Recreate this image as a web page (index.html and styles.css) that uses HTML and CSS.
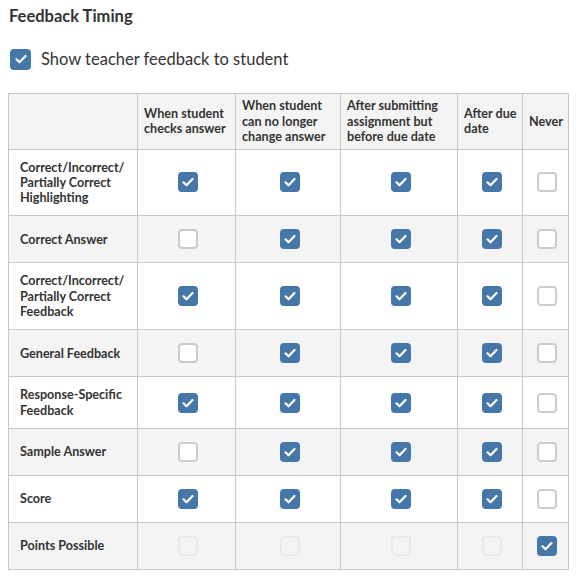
FILE: index.html
```html
<!DOCTYPE html>
<html>
<head>
<meta charset="utf-8">
<link rel="stylesheet" href="styles.css">
</head>
<body>
<div class="page">
  <h2 class="title">Feedback Timing</h2>
  <label class="show-row">
    <span class="cb cb-lg checked"><svg viewBox="0 0 20 20"><path d="M5.5 10.3l3 3 6-6.3" /></svg></span>
    <span class="show-text">Show teacher feedback to student</span>
  </label>
  <table class="grid">
    <colgroup>
      <col class="c0"><col class="c1"><col class="c2"><col class="c3"><col class="c4"><col class="c5">
    </colgroup>
    <thead>
      <tr>
        <th></th>
        <th>When student checks answer</th>
        <th>When student can no longer change answer</th>
        <th>After submitting assignment but before due date</th>
        <th>After due date</th>
        <th>Never</th>
      </tr>
    </thead>
    <tbody id="body"></tbody>
  </table>
</div>
<script src="app.js"></script>
</body>
</html>
```

FILE: app.js
```js
const rows = [
  ["Correct/Incorrect/ Partially Correct Highlighting", "11110"],
  ["Correct Answer", "01110"],
  ["Correct/Incorrect/ Partially Correct Feedback", "11110"],
  ["General Feedback", "01110"],
  ["Response-Specific Feedback", "11110"],
  ["Sample Answer", "01110"],
  ["Score", "11110"],
  ["Points Possible", "dddd1"]
];
const check = '<svg viewBox="0 0 20 20"><path d="M5.5 10.3l3 3 6-6.3" /></svg>';
const body = document.getElementById("body");
rows.forEach(([label, states]) => {
  const tr = document.createElement("tr");
  const th = document.createElement("td");
  th.className = "label";
  th.textContent = label;
  tr.appendChild(th);
  for (const s of states) {
    const td = document.createElement("td");
    td.className = "box";
    const cls = s === "1" ? "cb checked" : s === "d" ? "cb disabled" : "cb";
    td.innerHTML = '<span class="' + cls + '">' + (s === "1" ? check : "") + "</span>";
    tr.appendChild(td);
  }
  body.appendChild(tr);
});
```

FILE: styles.css
```css
html, body {
  margin: 0;
  padding: 0;
  background: #ffffff;
}
body {
  font-family: Lato, "Open Sans", sans-serif;
  color: #333333;
}
.page {
  padding: 4px 8px 0 8px;
}
.title {
  margin: 0 0 0 1px;
  font-size: 16.5px;
  font-weight: 700;
  line-height: 24px;
  color: #333333;
}
.show-row {
  display: flex;
  align-items: center;
  gap: 10px;
  margin: 20px 0 0 2px;
  height: 22px;
}
.show-text {
  font-size: 16.5px;
  line-height: 22px;
  color: #333333;
}
.cb {
  display: inline-flex;
  box-sizing: border-box;
  width: 20px;
  height: 20px;
  border: 2px solid #cccccc;
  border-radius: 4px;
  background: #ffffff;
  vertical-align: middle;
  align-items: center;
  justify-content: center;
}
.cb-lg {
  width: 21px;
  height: 21px;
}
.cb.checked {
  background: #4577a8;
  border-color: #4577a8;
}
.cb.disabled {
  background: transparent;
  border-color: #e9e9e9;
}
.cb svg {
  width: 20px;
  height: 20px;
  flex: none;
}
.cb svg path {
  fill: none;
  stroke: #ffffff;
  stroke-width: 2.2;
  stroke-linecap: round;
  stroke-linejoin: round;
}
.grid {
  margin-top: 23px;
  border-collapse: collapse;
  table-layout: fixed;
  width: 561px;
}
.c0 { width: 129px; }
.c1 { width: 98px; }
.c2 { width: 105px; }
.c3 { width: 117px; }
.c4 { width: 65px; }
.c5 { width: 46px; }
.grid th, .grid td {
  border: 1px solid #c8c8c8;
}
.grid th {
  background: #f4f4f4;
  font-size: 12.6px;
  font-weight: 700;
  line-height: 15.5px;
  text-align: left;
  padding: 4px 2px 4px 6px;
  vertical-align: middle;
}
.grid tbody tr:nth-child(even) td {
  background: #f4f4f4;
}
.grid td.label {
  font-size: 12.6px;
  font-weight: 700;
  line-height: 15.3px;
  padding: 10px 8px 10px 11px;
}
.grid td.box {
  text-align: center;
  padding: 13px 0 13px 3px;
  line-height: 0;
}
```
